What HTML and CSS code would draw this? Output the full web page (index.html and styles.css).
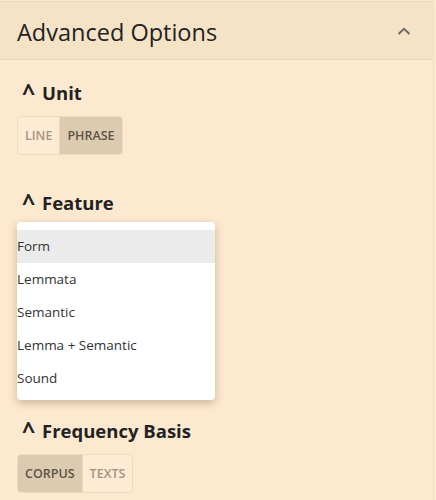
FILE: index.html
```
<!DOCTYPE html>
<html lang="en">
<head>
    <meta charset="UTF-8">
    <meta name="viewport" content="width=device-width, initial-scale=1.0">
    <title>Advanced Options</title>
    <link rel="stylesheet" href="styles.css">
</head>
<body>
    <div class="panel">
        <div class="panel-header">
            <h2>Advanced Options</h2>
            <svg class="chevron" width="14" height="8" viewBox="0 0 14 8">
                <path d="M1.5 7 L7 1.8 L12.5 7" fill="none" stroke="#6f6a64" stroke-width="2"/>
            </svg>
        </div>

        <div class="panel-body">
            <section class="option">
                <h3><span class="caret">^</span>Unit</h3>
                <div class="btn-group">
                    <button type="button">Line</button>
                    <button type="button" class="active">Phrase</button>
                </div>
            </section>

            <section class="option">
                <h3><span class="caret">^</span>Feature</h3>
                <ul class="menu">
                    <li class="selected">Form</li>
                    <li>Lemmata</li>
                    <li>Semantic</li>
                    <li>Lemma + Semantic</li>
                    <li>Sound</li>
                </ul>
            </section>

            <section class="option freq">
                <h3><span class="caret">^</span>Frequency Basis</h3>
                <div class="btn-group">
                    <button type="button" class="active">Corpus</button>
                    <button type="button">Texts</button>
                </div>
            </section>
        </div>
    </div>
</body>
</html>
```

FILE: styles.css
```
/* Page */
body {
    margin: 0;
    padding-top: 1px;
    background: #fde9d0;
    font-family: "Open Sans", "Noto Sans", sans-serif;
    color: #222;
}

/* Panel */
.panel {
    border-right: 1px solid #f4dcc0;
    margin-right: 2px;
}

.panel-header {
    display: flex;
    align-items: center;
    justify-content: space-between;
    height: 59px;
    padding: 3px 22px 0 17px;
    box-sizing: border-box;
    background: #f5e3c8;
    border-top: 1px solid #ead6b9;
    border-bottom: 1px solid #ead6b9;
}

.panel-header h2 {
    margin: 0;
    font-size: 23.5px;
    font-weight: 400;
    color: #222;
}

.chevron {
    display: block;
    margin-top: -3px;
}

.panel-body {
    padding: 19px 17px 20px;
}

/* Sections */
.option h3 {
    margin: 0;
    font-size: 18.5px;
    line-height: 28px;
    font-weight: 700;
    color: #222;
}

.option h3 .caret {
    display: inline-block;
    width: 20px;
    margin-left: 5px;
    transform: scale(1.25);
    transform-origin: 0 60%;
}

.option + .option {
    margin-top: 34px;
}

.option.freq {
    margin-top: 17px;
}

/* Button groups */
.btn-group {
    display: inline-flex;
    margin-top: 9px;
    border: 1px solid #f1dbbd;
    border-radius: 4px;
    overflow: hidden;
}

.btn-group button {
    height: 37px;
    padding: 0 7px;
    border: none;
    background: #fdebd4;
    color: #a39384;
    font-family: inherit;
    font-size: 12.5px;
    font-weight: 600;
    text-transform: uppercase;
}

.btn-group button + button {
    border-left: 1px solid #efd9bb;
}

.btn-group button.active {
    background: #dccab1;
    color: #5e5246;
}

/* Open dropdown */
.menu {
    list-style: none;
    margin: 5px 0 0;
    padding: 8px 0 5px;
    width: 198px;
    background: #fff;
    border-radius: 4px;
    box-shadow: 0 3px 8px rgba(90, 60, 20, 0.3);
}

.menu li {
    height: 33px;
    line-height: 33px;
    font-size: 13.5px;
    color: #333;
}

.menu li.selected {
    background: #ebebeb;
}
```
